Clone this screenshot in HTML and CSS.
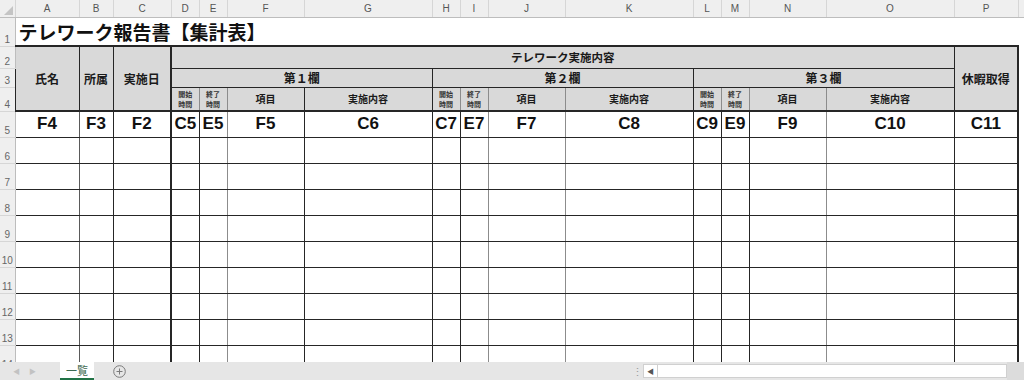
FILE: index.html
```html
<!DOCTYPE html>
<html lang="ja">
<head>
  <meta charset="UTF-8">
  <title>テレワーク報告書【集計表】</title>
  <link rel="stylesheet" href="styles.css">
</head>
<body>
  <div class="sheet-wrap">
    <table class="sheet">
      <colgroup>
        <col class="c-rh">
        <col class="c-a"><col class="c-b"><col class="c-c">
        <col class="c-s"><col class="c-s"><col class="c-f"><col class="c-g">
        <col class="c-s"><col class="c-s"><col class="c-f"><col class="c-g">
        <col class="c-s"><col class="c-s"><col class="c-f"><col class="c-g">
        <col class="c-a">
        <col class="c-rest">
      </colgroup>
      <thead>
        <tr class="colhdr">
          <th class="corner"><span class="tri"></span></th>
          <th>A</th><th>B</th><th>C</th><th>D</th><th>E</th><th>F</th><th>G</th><th>H</th>
          <th>I</th><th>J</th><th>K</th><th>L</th><th>M</th><th>N</th><th>O</th><th>P</th>
          <th class="rest"></th>
        </tr>
      </thead>
      <tbody>
        <tr class="r1">
          <th class="rh">1</th>
          <td class="title" colspan="16">テレワーク報告書【集計表】</td>
          <td class="rest"></td>
        </tr>
        <tr class="r2">
          <th class="rh">2</th>
          <td class="h top bottom" rowspan="3">氏名</td>
          <td class="h top bottom" rowspan="3">所属</td>
          <td class="h top bottom thick-r" rowspan="3">実施日</td>
          <td class="h top mid" colspan="12">テレワーク実施内容</td>
          <td class="h top bottom thick-r" rowspan="3">休暇取得</td>
          <td class="rest"></td>
        </tr>
        <tr class="r3">
          <th class="rh">3</th>
          <td class="h" colspan="4">第１欄</td>
          <td class="h" colspan="4">第２欄</td>
          <td class="h" colspan="4">第３欄</td>
          <td class="rest"></td>
        </tr>
        <tr class="r4">
          <th class="rh">4</th>
          <td class="h tiny bottom lt">開始<br>時間</td>
          <td class="h tiny bottom lt">終了<br>時間</td>
          <td class="h sm bottom">項目</td>
          <td class="h sm bottom">実施内容</td>
          <td class="h tiny bottom lt">開始<br>時間</td>
          <td class="h tiny bottom lt">終了<br>時間</td>
          <td class="h sm bottom lt">項目</td>
          <td class="h sm bottom">実施内容</td>
          <td class="h tiny bottom lt">開始<br>時間</td>
          <td class="h tiny bottom lt">終了<br>時間</td>
          <td class="h sm bottom lt">項目</td>
          <td class="h sm bottom">実施内容</td>
          <td class="rest"></td>
        </tr>
        <tr class="data codes">
          <th class="rh">5</th>
          <td>F4</td><td>F3</td><td>F2</td><td>C5</td><td>E5</td><td>F5</td><td>C6</td><td>C7</td>
          <td>E7</td><td>F7</td><td>C8</td><td>C9</td><td>E9</td><td>F9</td><td>C10</td><td>C11</td>
          <td class="rest"></td>
        </tr>
        <tr class="data"><th class="rh">6</th><td></td><td></td><td></td><td></td><td></td><td></td><td></td><td></td><td></td><td></td><td></td><td></td><td></td><td></td><td></td><td></td><td class="rest"></td></tr>
        <tr class="data"><th class="rh">7</th><td></td><td></td><td></td><td></td><td></td><td></td><td></td><td></td><td></td><td></td><td></td><td></td><td></td><td></td><td></td><td></td><td class="rest"></td></tr>
        <tr class="data"><th class="rh">8</th><td></td><td></td><td></td><td></td><td></td><td></td><td></td><td></td><td></td><td></td><td></td><td></td><td></td><td></td><td></td><td></td><td class="rest"></td></tr>
        <tr class="data"><th class="rh">9</th><td></td><td></td><td></td><td></td><td></td><td></td><td></td><td></td><td></td><td></td><td></td><td></td><td></td><td></td><td></td><td></td><td class="rest"></td></tr>
        <tr class="data"><th class="rh">10</th><td></td><td></td><td></td><td></td><td></td><td></td><td></td><td></td><td></td><td></td><td></td><td></td><td></td><td></td><td></td><td></td><td class="rest"></td></tr>
        <tr class="data"><th class="rh">11</th><td></td><td></td><td></td><td></td><td></td><td></td><td></td><td></td><td></td><td></td><td></td><td></td><td></td><td></td><td></td><td></td><td class="rest"></td></tr>
        <tr class="data"><th class="rh">12</th><td></td><td></td><td></td><td></td><td></td><td></td><td></td><td></td><td></td><td></td><td></td><td></td><td></td><td></td><td></td><td></td><td class="rest"></td></tr>
        <tr class="data"><th class="rh">13</th><td></td><td></td><td></td><td></td><td></td><td></td><td></td><td></td><td></td><td></td><td></td><td></td><td></td><td></td><td></td><td></td><td class="rest"></td></tr>
        <tr class="data"><th class="rh">14</th><td></td><td></td><td></td><td></td><td></td><td></td><td></td><td></td><td></td><td></td><td></td><td></td><td></td><td></td><td></td><td></td><td class="rest"></td></tr>
      </tbody>
    </table>
  </div>

  <div class="tabbar">
    <div class="nav"><span>&#9664;</span><span>&#9654;</span></div>
    <div class="tab">一覧</div>
    <div class="add">
      <svg width="13" height="13" viewBox="0 0 13 13">
        <circle cx="6.5" cy="6.5" r="5.8" fill="none" stroke="#7a7a7a" stroke-width="1"/>
        <path d="M6.5 3.5v6M3.5 6.5h6" stroke="#7a7a7a" stroke-width="1"/>
      </svg>
    </div>
    <div class="spacer"></div>
    <div class="dots">&#8942;</div>
    <div class="hscroll">
      <span class="arrow">&#9664;</span>
      <span class="thumb"></span>
    </div>
    <div class="corner-box"></div>
  </div>
</body>
</html>
```

FILE: styles.css
```css
body {
  margin: 0;
  width: 1024px;
  height: 380px;
  overflow: hidden;
  background: #fff;
  font-family: "Noto Sans CJK JP", sans-serif;
}

.sheet-wrap {
  height: 362px;
  overflow: hidden;
}

.sheet {
  border-collapse: collapse;
  table-layout: fixed;
  width: 1024px;
}

.c-rh { width: 15px; }
.c-a { width: 64px; }
.c-b { width: 34px; }
.c-c { width: 58px; }
.c-s { width: 28px; }
.c-f { width: 77px; }
.c-g { width: 128px; }
.c-rest { width: 6px; }

.sheet th,
.sheet td {
  padding: 0;
  overflow: hidden;
  white-space: nowrap;
}

/* column letters */
.colhdr { height: 17px; }

.colhdr th {
  background: #efefef;
  color: #555;
  font-family: "Liberation Sans", sans-serif;
  font-size: 10px;
  font-weight: normal;
  border-right: 1px solid #d6d6d6;
  border-bottom: 1px solid #bdbdbd;
}

.corner {
  position: relative;
}

.corner .tri {
  position: absolute;
  right: 2px;
  bottom: 2px;
  width: 0;
  height: 0;
  border-left: 9px solid transparent;
  border-bottom: 9px solid #c4c4c4;
}

/* row numbers */
.rh {
  background: #efefef;
  color: #666;
  font-family: "Liberation Sans", sans-serif;
  font-size: 10px;
  font-weight: normal;
  vertical-align: bottom;
  line-height: 13px;
  border-right: 1px solid #bdbdbd;
  border-bottom: 1px solid #d6d6d6;
}

.rest {
  background: #fff;
}

.colhdr th.rest {
  background: #efefef;
  border-right: none;
}

.r1 { height: 29px; }
.r2 { height: 22px; }
.r3 { height: 19px; }
.r4 { height: 24px; }
.data { height: 26px; }

.title {
  font-size: 19px;
  font-weight: bold;
  color: #111;
  padding-left: 3px !important;
  vertical-align: middle;
}

/* header block */
.h {
  background: #d9d9d9;
  color: #1a1a1a;
  font-size: 12px;
  font-weight: bold;
  text-align: center;
  vertical-align: middle;
  border: 1px solid #262626;
}

.h.top { border-top: 2px solid #262626; }
.h.bottom { border-bottom: 2px solid #262626; }
.h.thick-r { border-right: 2px solid #262626; }
.h.lt { border-right-color: #8c8c8c; }

.h.mid {
  font-size: 11.5px;
}

.h.sm {
  font-size: 10px;
}

.h.tiny {
  font-size: 7px;
  line-height: 10px;
  color: #333;
}

/* body cells */
.data td {
  border: 1px solid #262626;
  text-align: center;
  vertical-align: middle;
}

.data td.rest {
  border: none;
}

.data td:nth-child(2) { border-right-color: #5a5a5a; }
.data td:nth-child(4) { border-right: 2px solid #262626; }
.data td:nth-child(6),
.data td:nth-child(10),
.data td:nth-child(11),
.data td:nth-child(15) { border-right-color: #8c8c8c; }
.data td:nth-child(17) { border-right: 2px solid #262626; }

.codes td {
  font-family: "Liberation Sans", sans-serif;
  font-size: 17px;
  font-weight: bold;
  color: #111;
}

/* sheet tabs */
.tabbar {
  height: 18px;
  display: flex;
  align-items: stretch;
  background: #e6e6e6;
}

.nav {
  width: 56px;
  display: flex;
  align-items: center;
  gap: 9px;
  padding-left: 13px;
  box-sizing: border-box;
  color: #c2c2c2;
  font-size: 7px;
}

.tab {
  width: 34px;
  margin-left: 4px;
  background: #fff;
  color: #3f6b52;
  font-size: 11px;
  text-align: center;
  line-height: 16px;
  border-bottom: 2px solid #217346;
}

.add {
  margin-left: 19px;
  display: flex;
  align-items: center;
}

.spacer {
  flex: 1;
}

.dots {
  width: 11px;
  color: #9a9a9a;
  font-size: 11px;
  line-height: 18px;
  text-align: center;
}

.hscroll {
  width: 364px;
  margin: 2px 0;
  display: flex;
  background: #fff;
  border: 1px solid #d0d0d0;
  box-sizing: border-box;
}

.hscroll .arrow {
  width: 13px;
  font-size: 7px;
  color: #555;
  line-height: 12px;
  text-align: center;
  border-right: 1px solid #d0d0d0;
}

.hscroll .thumb {
  flex: 1;
}

.corner-box {
  width: 17px;
  background: #dcdcdc;
}
```
